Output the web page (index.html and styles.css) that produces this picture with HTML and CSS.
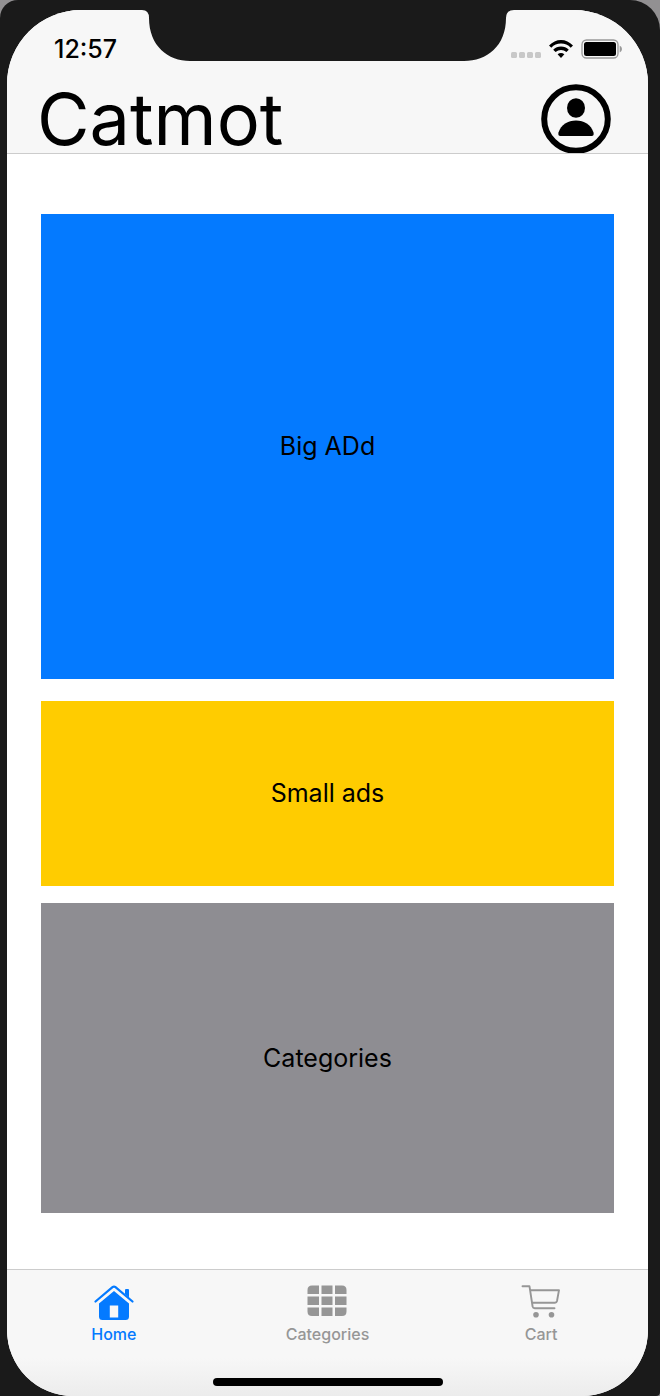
FILE: index.html
```html
<!DOCTYPE html>
<html lang="en">
<head>
<meta charset="utf-8">
<meta name="viewport" content="width=device-width, initial-scale=1">
<title>Catmot</title>
<link rel="stylesheet" href="styles.css">
</head>
<body>
<div class="device">
  <div class="screen">
    <header class="top">
      <div class="status">
        <time class="clock">12:57</time>
        <div class="indicators">
          <svg class="signal" viewBox="0 0 30 6" aria-hidden="true"><rect width="6" height="6" rx="1.5"/><rect x="8" width="6" height="6" rx="1.5"/><rect x="16" width="6" height="6" rx="1.5"/><rect x="24" width="6" height="6" rx="1.5"/></svg>
          <svg class="wifi" viewBox="0 0 24 18" aria-hidden="true">
            <path d="M0 5.600Q5.200 0 12 0T24 5.600L21.700 7.800Q17.800 3.600 12 3.600T2.300 7.800Z"/>
            <path d="M4.200 9.700Q7.500 6.500 12 6.500T19.800 9.700L17.400 12.100Q15 10 12 10T6.600 12.100Z"/>
            <path d="M8.600 14.300Q12 11.600 15.400 14.300L12 18Z"/>
          </svg>
          <svg class="battery" viewBox="0 0 41 20" aria-hidden="true">
            <rect x="1" y="1" width="36" height="18" rx="4.500" fill="none" stroke="#999" stroke-width="1.300"/>
            <rect x="3" y="3" width="32" height="14" rx="2.500"/>
            <path d="M38.700 6.500Q41 7.500 41 10T38.700 13.500Z" fill="#999"/>
          </svg>
        </div>
      </div>
      <div class="title-row">
        <h1 class="title">Catmot</h1>
        <button class="profile" type="button" aria-label="Profile">
          <svg viewBox="0 0 70 70" aria-hidden="true">
            <circle cx="35" cy="35" r="31.800" fill="none" stroke="#000" stroke-width="6"/>
            <ellipse cx="35" cy="24" rx="9" ry="9.800"/>
            <path d="M17.500 48.500C20 40.500 27 36.500 35 36.500S50 40.500 52.500 48.500Q53.300 52 50.500 52H19.500Q16.700 52 17.500 48.500Z"/>
          </svg>
        </button>
      </div>
    </header>
    <svg class="notch" viewBox="0 0 372 52" aria-hidden="true"><path d="M0 0H372Q364 0 364 8C364 36 345 51 322 51H48C26 51 7 36 7 8Q7 0 0 0Z"/></svg>
    <main class="content">
      <section class="panel big">Big ADd</section>
      <section class="panel small">Small ads</section>
      <section class="panel categories">Categories</section>
    </main>
    <nav class="tabs">
      <a class="tab active" href="#home">
        <svg class="tab-icon" viewBox="0 0 40 36" aria-hidden="true">
          <path d="M1.500 16.500L18.500 2.200Q20 1 21.500 2.200L38.500 16.500" fill="none" stroke="currentColor" stroke-width="2.200" stroke-linecap="round" stroke-linejoin="round"/>
          <path d="M31 9V5Q31 4 32 4H34Q35 4 35 5V12.500Z"/>
          <path fill-rule="evenodd" d="M20 6L35 18.500V31.500Q35 35 31.500 35H8.500Q5 35 5 31.500V18.500ZM15.800 20.500V32.500H24.200V20.500Z"/>
        </svg>
        <span>Home</span>
      </a>
      <a class="tab" href="#categories">
        <svg class="tab-icon" viewBox="0 0 40 36" aria-hidden="true">
          <path d="M5 .500H12V9H.500V5Q.500 .500 5 .500ZM14.500 .500H25.500V9H14.500ZM28 .500H35Q39.500 .500 39.500 5V9H28ZM.500 11.500H12V20H.500ZM14.500 11.500H25.500V20H14.500ZM28 11.500H39.500V20H28ZM.500 22.500H12V31H5Q.500 31 .500 26.500ZM14.500 22.500H25.500V31H14.500ZM28 22.500H39.500V26.500Q39.500 31 35 31H28Z"/>
        </svg>
        <span>Categories</span>
      </a>
      <a class="tab" href="#cart">
        <svg class="tab-icon" viewBox="0 0 40 36" aria-hidden="true">
          <path d="M1.500 1.300H8.500L11.600 21.500Q12 23.200 13.700 23.200H33.500M9.300 5.200H38L36 16Q35.600 17.700 34 17.700H11.200" fill="none" stroke="currentColor" stroke-width="1.900" stroke-linecap="round" stroke-linejoin="round"/>
          <circle cx="15" cy="29.800" r="2.800"/><circle cx="30.500" cy="29.800" r="2.800"/>
        </svg>
        <span>Cart</span>
      </a>
    </nav>
    <div class="home-bar"></div>
  </div>
</div>
</body>
</html>
```
FILE: styles.css
```css
* {
  box-sizing: border-box;
}

body {
  margin: 0;
  background: #929092;
  color: #000;
  font-family: Inter, "Liberation Sans", sans-serif;
}

.device {
  display: flex;
  min-height: 100vh;
  padding: 10px 12px 0 7px;
  background: #1a1a1a;
  border-radius: 18px 30px 4px 0;
}

.screen {
  position: relative;
  display: flex;
  flex: 1;
  flex-direction: column;
  overflow: hidden;
  background: #fff;
  border-radius: 74px 74px 66px 66px;
}

.notch {
  position: absolute;
  top: 0;
  left: 50%;
  width: 372px;
  margin-left: -186px;
  fill: #1a1a1a;
}

.top {
  background: #f7f7f7;
  border-bottom: 1px solid #ccc;
}

.status {
  display: flex;
  align-items: center;
  justify-content: space-between;
  height: 74px;
  padding: 4px 26px 0 47px;
}

.clock {
  font-size: 25px;
  font-weight: 500;
  line-height: 32px;
}

.indicators {
  display: flex;
  align-items: center;
  gap: 8px;
}

.signal {
  width: 30px;
  margin-top: 11px;
  fill: #c8c8c8;
}

.wifi {
  width: 24px;
}

.battery {
  width: 41px;
}

.title-row {
  display: flex;
  align-items: center;
  justify-content: space-between;
  padding: 0 37px 0 30px;
}

.title {
  margin: 0;
  font-size: 72px;
  font-weight: 400;
  line-height: 69px;
}

.profile {
  width: 70px;
  height: 69px;
  padding: 0;
  overflow: hidden;
  border: 0;
  background: none;
}

.profile svg {
  display: block;
  width: 70px;
  height: 70px;
}

.content {
  display: flex;
  flex: 1;
  flex-direction: column;
  padding: 60px 34px 56px;
}

.panel {
  display: flex;
  align-items: center;
  justify-content: center;
  font-size: 25px;
  line-height: 32px;
}

.big {
  flex: 15 0 0;
  margin-bottom: 22px;
  background: #047aff;
}

.small {
  flex: 6 0 0;
  margin-bottom: 17px;
  background: #fc0;
}

.categories {
  flex: 10 0 0;
  background: #8e8d92;
}

.tabs {
  display: grid;
  grid-template-columns: repeat(3, 1fr);
  height: 127px;
  padding-top: 15px;
  background: linear-gradient(#f7f7f7 70%, #ececec);
  border-top: 1px solid #ccc;
}

.tab {
  display: flex;
  flex-direction: column;
  align-items: center;
  gap: 3px;
  color: #969696;
  font-size: 16px;
  font-weight: 500;
  line-height: 20px;
  text-decoration: none;
}

.active {
  color: #047aff;
}

.tab-icon {
  width: 40px;
  height: 36px;
  fill: currentColor;
}

.home-bar {
  position: absolute;
  bottom: 10px;
  left: 50%;
  width: 230px;
  height: 8px;
  margin-left: -115px;
  background: #000;
  border-radius: 4px;
}
```
